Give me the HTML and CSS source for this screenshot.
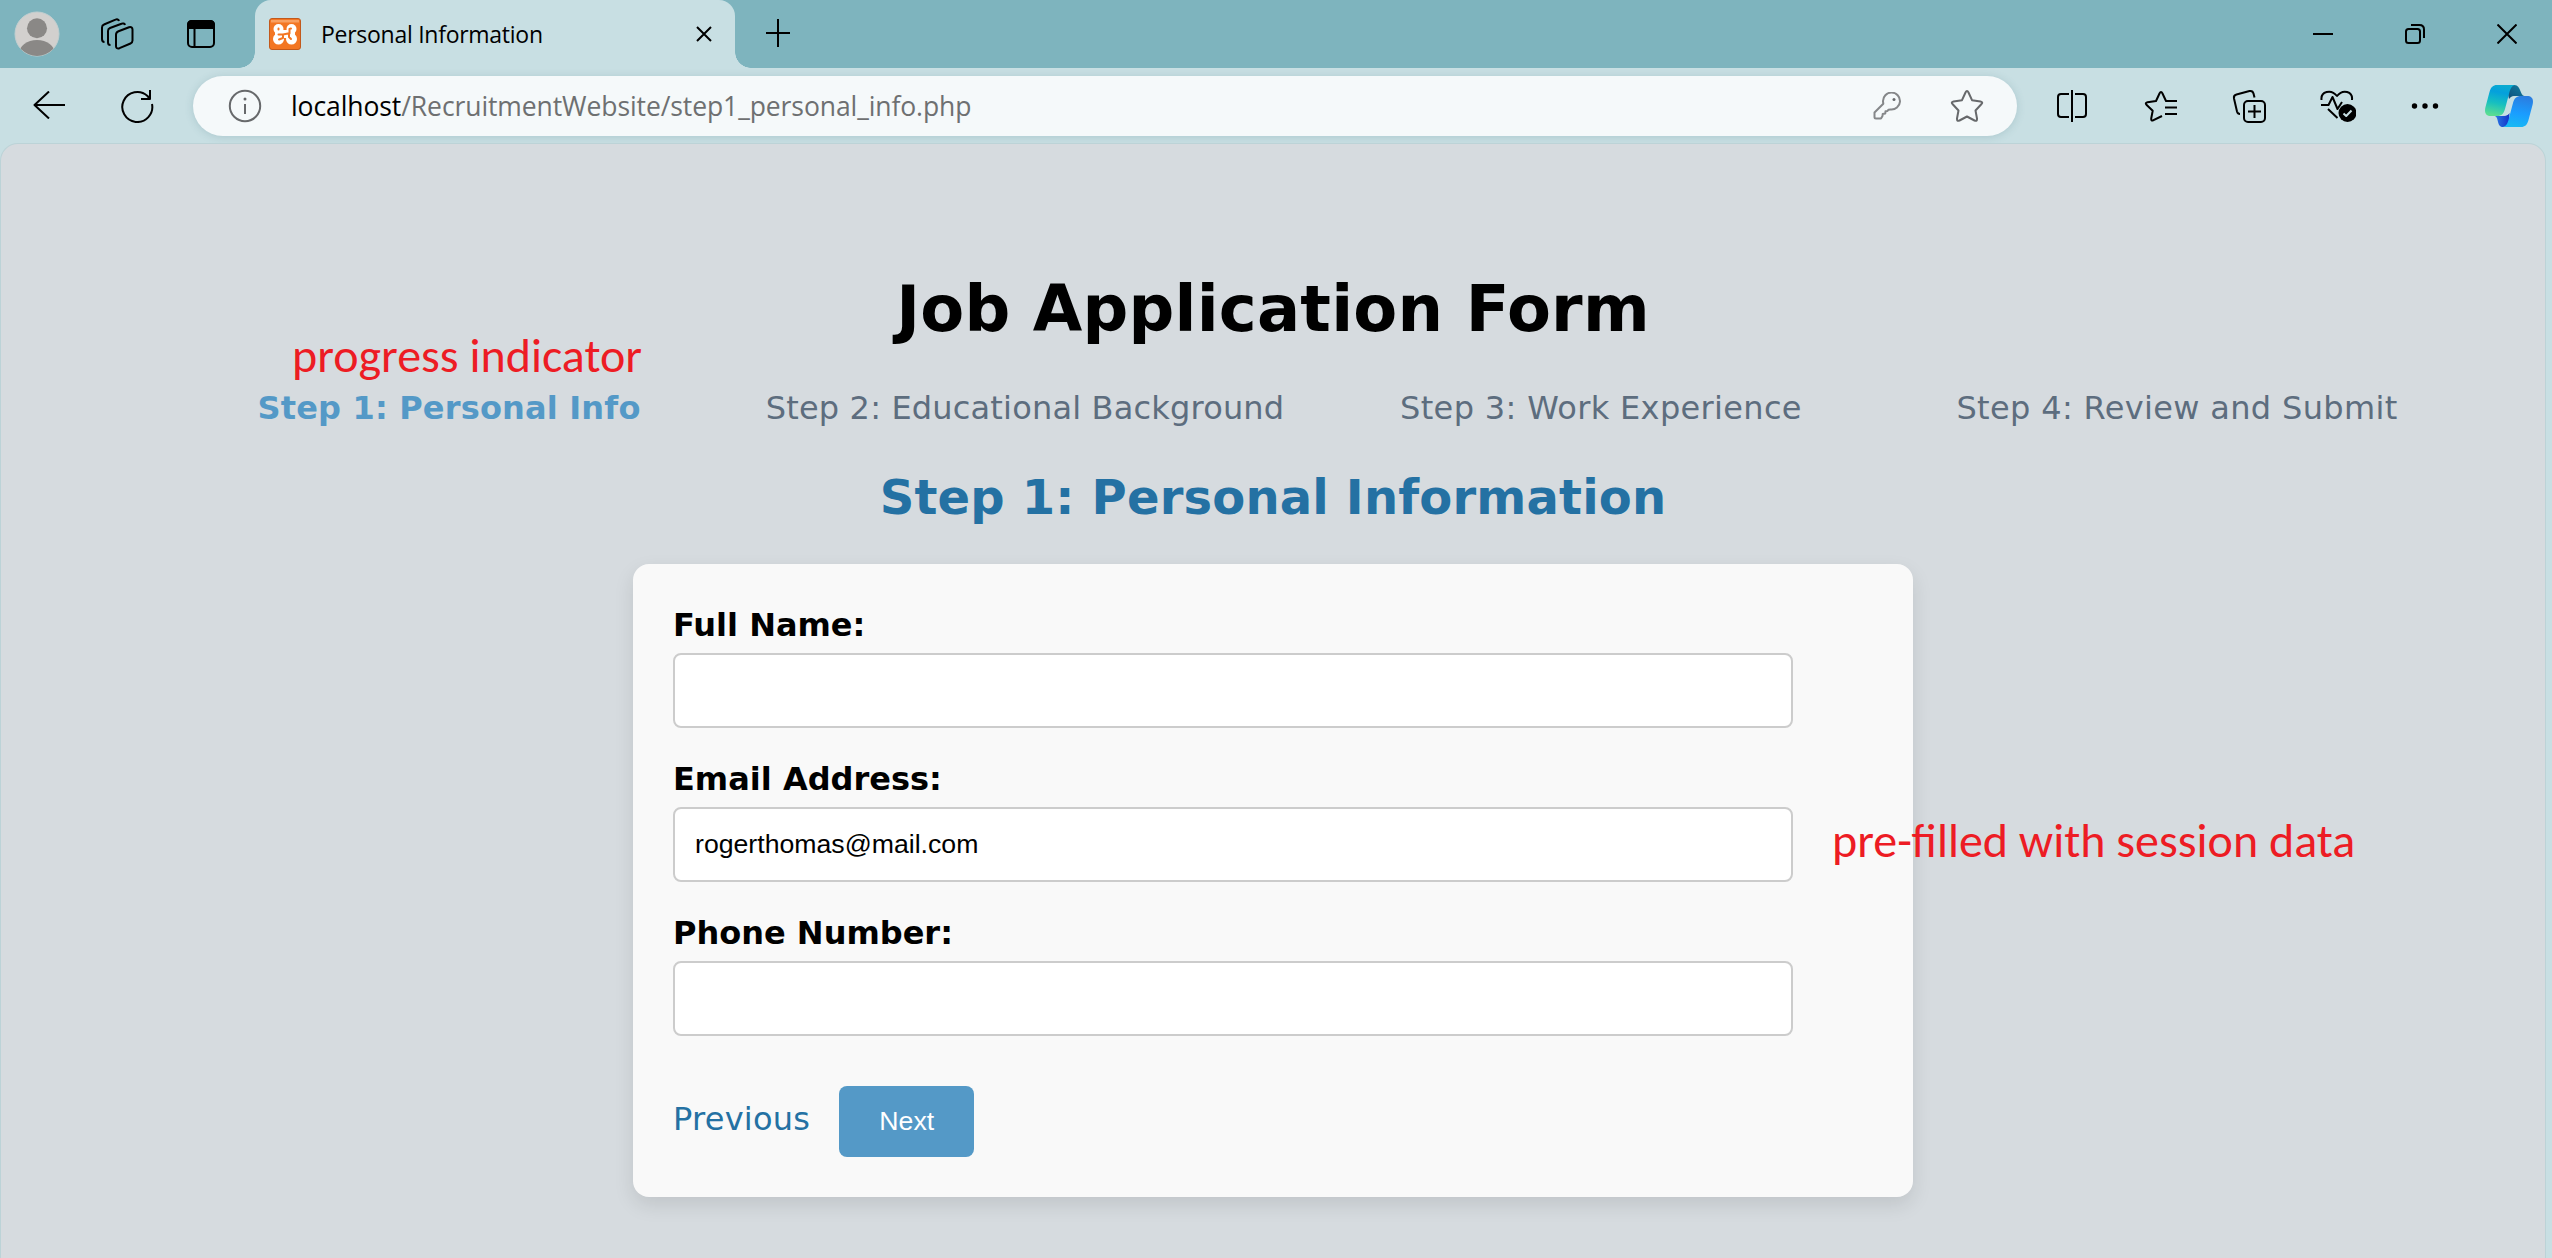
FILE: index.html
```html
<!DOCTYPE html>
<html lang="en">
<head>
<meta charset="utf-8">
<title>Personal Information</title>
<link rel="stylesheet" href="styles.css">
</head>
<body>
<div class="browser">
  <header class="titlebar">
    <div class="titlebar-left">
      <svg class="avatar" width="46" height="46" viewBox="0 0 46 46">
        <defs><clipPath id="face"><circle cx="23" cy="23" r="22"/></clipPath></defs>
        <circle cx="23" cy="23" r="22" fill="#d2d0ce" stroke="#c3cfd0" stroke-width="1"/>
        <g clip-path="url(#face)" fill="#8a8886"><circle cx="23" cy="17.300" r="10"/><ellipse cx="23" cy="43" rx="18" ry="14"/></g>
      </svg>
      <svg class="icon" width="34" height="34" viewBox="0 0 34 34">
        <path d="M4.500 25C2.500 25 2 24 2 22V10.500C2 9 2.700 8 4 7.500L15.500 2.700C17 2 18.500 2.300 19 4"/>
        <path d="M10.500 28C8.700 28 8 27 8 25.500V14C8 12.500 8.700 11.500 10 11L21.500 6.700C23 6 24.700 6.500 25 8"/>
        <path d="M18.500 14.200L29 10.200C31 9.500 32.500 10.500 32.500 12.500V23.500C32.500 25 31.800 26 30.500 26.500L19.500 31.200C17.500 32 16 31.200 16 29.200V17.800C16 16 17 14.800 18.500 14.200Z"/>
      </svg>
      <svg class="icon" width="28" height="28" viewBox="0 0 28 28">
        <rect x="1" y="1" width="26" height="26" rx="4"/>
        <path d="M1 8V5Q1 1 5 1H23Q27 1 27 5V8Z" fill="#000"/><path d="M7.500 8V27"/>
      </svg>
    </div>
    <div class="tab">
      <svg class="favicon" width="32" height="32" viewBox="0 0 32 32">
        <rect x="0.500" y="0.500" width="31" height="31" rx="2.500" fill="#f37623" stroke="#c2591c"/>
        <path d="M2 2H30V4.500H2Z" fill="#fbb27c" opacity=".7"/>
        <g fill="#fff">
          <circle cx="9.500" cy="11" r="5"/><circle cx="22.500" cy="11" r="5"/>
          <circle cx="9.500" cy="21" r="5.500"/><circle cx="22.500" cy="21" r="5.500"/>
          <rect x="6" y="12" width="20" height="8"/>
        </g>
        <g fill="none" stroke="#f37623" stroke-width="2" stroke-linecap="round" stroke-linejoin="round">
          <path d="M9.500 10.500V11.500M9.500 16.500H14V20L10 21.500M14 16.500L19 15.500H20.500V11L22 10.500M20 15.500V19L22 21"/>
        </g>
      </svg>
      <span class="tab-title">Personal Information</span>
      <svg class="icon" width="18" height="18" viewBox="0 0 18 18"><path d="M2 2L16 16M16 2L2 16"/></svg>
    </div>
    <svg class="icon new-tab" width="28" height="28" viewBox="0 0 28 28"><path d="M2 14H26M14 0V28"/></svg>
    <div class="window-controls">
      <svg class="icon" width="20" height="20" viewBox="0 0 20 20"><path d="M0 10H20"/></svg>
      <svg class="icon" width="20" height="20" viewBox="0 0 20 20"><rect x="1" y="5" width="14" height="14" rx="2.500"/><path d="M6 1H14.500Q19 1 19 5.500V14"/></svg>
      <svg class="icon" width="20" height="20" viewBox="0 0 20 20"><path d="M.5.500L19.500 19.500M19.500.5L.5 19.500"/></svg>
    </div>
  </header>

  <div class="toolbar">
    <svg class="icon back" width="32" height="28" viewBox="0 0 32 28"><path d="M1 14H32M16 .5L1.500 14L16 27.500"/></svg>
    <svg class="icon reload" width="34" height="34" viewBox="0 0 34 34"><path d="M32 15A15 15 0 1 1 27.500 7L30 10M30 1V10H21"/></svg>
    <div class="address">
      <svg class="icon muted" width="34" height="34" viewBox="0 0 34 34"><circle cx="17" cy="17" r="15.200"/><path d="M17 15V25"/><circle cx="17" cy="10" r="1.500" class="dot"/></svg>
      <span class="url"><b>localhost</b>/RecruitmentWebsite/step1_personal_info.php</span>
      <svg class="icon key" width="28" height="28" viewBox="0 0 28 28"><path d="M10 9.500A8.500 8.500 0 1 1 17.500 17.500L15.500 17.700L14.500 19L12.500 19.200L12.300 21.500L9.700 22L9.500 24L8 26.500H3Q1.500 26.500 1.500 25V20.500L10.300 11.700Z"/><circle cx="21" cy="7.500" r="1.500" class="dot"/></svg>
      <svg class="icon muted" width="34" height="34" viewBox="0 0 34 34"><path d="M15.500 3.500Q17 .5 18.500 3.500L22 11.200L30.500 12.400Q33.500 13 31.300 15.200L25.500 21.500L27 29.500Q27.300 32.700 24.500 31.500L17 27.500L9.500 31.500Q6.700 32.700 7 29.500L8.500 21.500L2.700 15.200Q.5 13 3.500 12.400L12 11.200Z"/></svg>
    </div>
    <div class="actions">
      <svg class="icon" width="32" height="34" viewBox="0 0 32 34"><path d="M16 1V33M13 5H5Q2 5 2 8V25Q2 28 5 28H13M19 5H27Q30 5 30 8V25Q30 28 27 28H19"/></svg>
      <svg class="icon favorites" width="34" height="34" viewBox="0 0 34 34"><path d="M33 12H22L18.500 4.500Q17 1.500 15.500 4.500L12 12L3.500 13.200Q.5 13.800 2.700 16L8.700 21.800L7.200 29.500Q7 32.500 9.500 31.200L18 27M21 18.500H33M21 25H33"/></svg>
      <svg class="icon collections" width="34" height="34" viewBox="0 0 34 34"><path d="M8 25C6.500 25 5.500 24.200 5 22.500L2 9.500C1.600 7.500 2.500 6 4.500 5.500L17.500 2C19.500 1.600 21 2.500 21.500 4.500L22.500 8.500"/><rect x="12" y="12" width="21" height="21" rx="4"/><path d="M22.500 16V29M16 22.500H29"/></svg>
      <svg class="icon health" width="36" height="34" viewBox="0 0 36 34"><path d="M1.500 11C.5 2.500 11 -.5 17 7C23 -.5 33 2.500 32 11M1 16H8.500L12.500 8L17.500 20L22 13M8 20L17.500 29"/><circle cx="27.500" cy="24" r="9" class="solid"/><path class="check" d="M23.500 24.500L26.200 27L31.500 21.500"/></svg>
      <svg class="more" width="28" height="8" viewBox="0 0 28 8"><circle cx="3.500" cy="4" r="2.700"/><circle cx="14" cy="4" r="2.700"/><circle cx="24.500" cy="4" r="2.700"/></svg>
      <svg class="copilot" width="48" height="42" viewBox="0 0 48 42">
        <defs>
          <linearGradient id="cp1" x1=".6" y1="0" x2=".4" y2="1"><stop offset="0" stop-color="#0aabd0"/><stop offset=".25" stop-color="#04a0dc"/><stop offset=".6" stop-color="#16bfc0"/><stop offset="1" stop-color="#5bdd92"/></linearGradient>
          <linearGradient id="cp2" x1=".6" y1="0" x2=".4" y2="1"><stop offset="0" stop-color="#2b7de0"/><stop offset=".55" stop-color="#1a9dff"/><stop offset="1" stop-color="#18b9f4"/></linearGradient>
          <linearGradient id="cp3" x1="0" y1="1" x2="1" y2="0"><stop offset="0" stop-color="#0d4c7a"/><stop offset="1" stop-color="#1280a3"/></linearGradient>
          <linearGradient id="cp4"><stop offset="0" stop-color="#2b7fe6"/><stop offset="1" stop-color="#1532c8"/></linearGradient>
        </defs>
        <path d="M26 0H29.500C36 0 35 11 39.500 11H30C27 11 25.500 12 24 14L22 5Z" fill="url(#cp3)"/>
        <path d="M9 31H18C21 31 23 30 24.500 28L24 36C23 40 21 42 18 42C11 42 14.500 31 9 31Z" fill="url(#cp4)"/>
        <path d="M12 0H30C26 1 25 5 24 9L20 24C18.500 29 16.500 31 12 31H6C1 31-1 28 .5 22L4.500 7C6 2 8 0 12 0Z" fill="url(#cp1)"/>
        <path d="M36 42H18C22 41 23 37 24 33L28 18C29.500 13 31.500 11 36 11H42C47 11 49 14 47.500 20L43.500 35C42 40 40 42 36 42Z" fill="url(#cp2)"/>
        <path d="M30 11.200C27 11.200 25.300 12 24.300 15.500L21 26.500C20 29.500 19 30.500 17.500 30.800C21.500 30.800 23.800 30 24.800 26.500L28 15.500C28.700 13 29.500 11.800 31.500 11.200Z" fill="#c8dfe3"/>
      </svg>
    </div>
  </div>

  <main class="page">
    <h1>Job Application Form</h1>
    <ul class="progress">
      <li class="active">Step 1: Personal Info<span class="note note-progress">progress indicator</span></li>
      <li>Step 2: Educational Background</li>
      <li class="wide">Step 3: Work Experience</li>
      <li class="wide">Step 4: Review and Submit</li>
    </ul>
    <h2>Step 1: Personal Information</h2>
    <form class="card">
      <label for="name">Full Name:</label>
      <input id="name" type="text">
      <label for="email">Email Address:</label>
      <div class="field">
        <input id="email" type="email" value="rogerthomas@mail.com">
        <span class="note note-email">pre-filled with session data</span>
      </div>
      <label for="phone">Phone Number:</label>
      <input id="phone" type="tel">
      <div class="buttons">
        <a class="previous">Previous</a>
        <button type="button">Next</button>
      </div>
    </form>
  </main>
</div>
</body>
</html>
```
FILE: styles.css
```css
* { box-sizing: border-box; }

body {
  margin: 0;
  overflow: hidden;
  font-family: Verdana, "DejaVu Sans", sans-serif;
}

svg { display: block; flex: none; }

.browser {
  display: flex;
  flex-direction: column;
  height: 1258px;
  background: #c8dfe3;
}

.icon {
  fill: none;
  stroke: #000;
  stroke-width: 2;
  stroke-linecap: butt;
  stroke-linejoin: round;
}
.icon.muted { stroke: #67696b; }
.icon.key { stroke: #858789; }
.icon .solid { fill: #000; stroke: none; }
.icon .dot { fill: #67696b; stroke: none; }
.icon .check { stroke: #c8dfe3; }

/* Title bar */
.titlebar {
  display: flex;
  align-items: center;
  height: 68px;
  flex: none;
  background: #7eb4be;
}
.titlebar-left {
  display: flex;
  align-items: center;
  width: 255px;
  padding-left: 14px;
}
.titlebar-left .icon { margin-left: 40px; }
.titlebar-left .icon + .icon { margin-left: 53px; }

.tab {
  position: relative;
  display: flex;
  align-items: center;
  width: 480px;
  height: 68px;
  padding: 0 22px 0 14px;
  border-radius: 16px 16px 0 0;
  background: #c8dfe3;
}
.tab::before,
.tab::after {
  content: "";
  position: absolute;
  bottom: 0;
  width: 16px;
  height: 16px;
}
.tab::before {
  left: -16px;
  background: radial-gradient(circle at 0 0, transparent 15.5px, #c8dfe3 16px);
}
.tab::after {
  right: -16px;
  background: radial-gradient(circle at 100% 0, transparent 15.5px, #c8dfe3 16px);
}
.tab-title {
  flex: 1;
  margin-left: 20px;
  font: 23px/34px "Segoe UI", "Open Sans", sans-serif;
  letter-spacing: -0.27px;
}
.new-tab { margin-left: 29px; margin-top: -2px; }
.window-controls {
  display: flex;
  gap: 72px;
  margin-left: auto;
  padding-right: 35px;
}

/* Toolbar */
.toolbar {
  display: flex;
  align-items: center;
  flex: none;
  height: 76px;
}
.back { margin-left: 33px; margin-top: -3px; }
.reload { margin-left: 55px; }
.address {
  display: flex;
  align-items: center;
  width: 1824px;
  height: 60px;
  margin-left: 39px;
  padding: 0 33px 0 35px;
  border-radius: 30px;
  background: #f5f9fa;
  box-shadow: 0 1px 9px rgba(60, 110, 120, 0.2);
}
.url {
  flex: 1;
  margin-left: 29px;
  font: 26.5px/40px "Segoe UI", "Open Sans", sans-serif;
  letter-spacing: -0.09px;
  color: #6e7071;
}
.url b { font-weight: 400; color: #000; }
.key { margin-right: 49px; }
.actions {
  display: flex;
  align-items: center;
  margin-left: 39px;
}
.favorites { margin-left: 56px; }
.collections { margin-left: 54px; }
.health { margin-left: 54px; }
.more { margin-left: 55px; }
.copilot { margin-left: 46px; }

/* Page */
.page {
  flex: 1;
  width: 2544px;
  margin-left: 1px;
  padding: 126px 80px 0;
  border-radius: 17px 17px 0 0;
  background: #d6dbdf;
  box-shadow: 0 0 0 1px #bcd3d7;
}
h1, h2 { margin: 0; text-align: center; }
h1 {
  font-size: 64px;
  line-height: 78px;
  letter-spacing: 0.19px;
}
h2 {
  margin-bottom: 38px;
  font-size: 48px;
  line-height: 58px;
  letter-spacing: 0.18px;
  color: #2471a3;
}
.progress {
  display: flex;
  margin: 40px 0;
  padding: 0 0 0 80px;
  list-style: none;
  font-size: 32px;
  line-height: 40px;
  letter-spacing: 0.18px;
  color: #5d6d7e;
}
.progress li { flex: 1; text-align: center; }
.progress .wide { letter-spacing: 0.34px; }
.progress .active {
  position: relative;
  font-weight: 700;
  color: #5499c7;
}

/* Callouts over the page */
.note {
  position: absolute;
  font: 48px/58px Calibri, Carlito, Lato, sans-serif;
  letter-spacing: 0;
  white-space: nowrap;
  color: #ed1c24;
}
.note-progress { left: 131px; bottom: 43px; }
.note-email { left: 1159px; top: 13px; }

/* Form */
.card {
  display: flex;
  flex-direction: column;
  width: 1280px;
  height: 633px;
  margin: 0 auto;
  padding: 41px 40px 40px;
  border-radius: 16px;
  background: #f9f9f9;
  box-shadow: 0 8px 20px rgba(0, 0, 0, 0.1);
}
label {
  font-size: 32px;
  line-height: 40px;
  font-weight: 700;
}
input {
  display: block;
  width: 1120px;
  height: 75px;
  margin: 8px 0 31px;
  padding: 0 20px;
  border: 2px solid #ccc;
  border-radius: 8px;
  background: #fff;
  font: 26.67px Arial, "Liberation Sans", sans-serif;
  color: #000;
}
.field { position: relative; }
.buttons {
  display: flex;
  align-items: baseline;
  gap: 29px;
  margin-top: 19px;
}
.previous {
  font-size: 32px;
  line-height: 40px;
  letter-spacing: 0.25px;
  color: #2471a3;
}
button {
  width: 135px;
  height: 71px;
  padding: 0;
  border: 0;
  border-radius: 8px;
  background: #5499c7;
  font: 26.67px Arial, "Liberation Sans", sans-serif;
  color: #fff;
}
```
